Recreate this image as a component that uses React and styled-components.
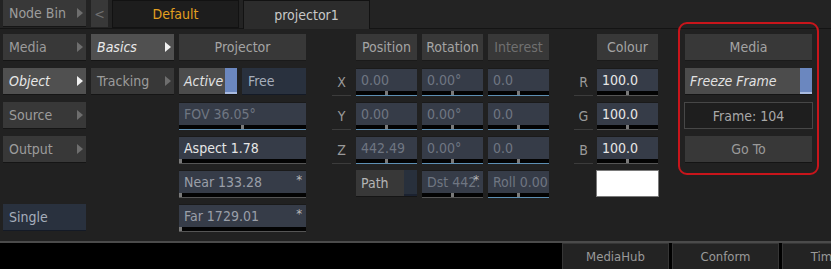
import React from "react";
import styled, { createGlobalStyle, css } from "styled-components";

const GlobalStyle = createGlobalStyle`
  html, body { margin: 0; padding: 0; background: #212121; }
  body {
    font-family: "Liberation Sans Narrow", "DejaVu Sans Condensed", Roboto, sans-serif;
    font-size: 14px;
  }
  * { box-sizing: border-box; }
`;

const Root = styled.div`
  width: 831px;
  height: 269px;
  display: flex;
  flex-direction: column;
  background: #212121;
  overflow: hidden;
`;

const TopBar = styled.div`
  height: 29px;
  display: flex;
  align-items: flex-start;
  padding-left: 3px;
  background: #232323;
  border-bottom: 1px solid #141414;
`;

const arrow = css`
  &::after {
    content: "";
    position: absolute;
    right: 3px;
    top: 50%;
    margin-top: -5px;
    border-style: solid;
    border-width: 5px 0 5px 6px;
    border-color: transparent transparent transparent ${(p) => (p.$selected ? "#f0f0f0" : "#6e6e6e")};
  }
`;

const NavButton = styled.div`
  position: relative;
  height: 27px;
  width: ${(p) => p.$w || 83}px;
  display: flex;
  align-items: center;
  padding-left: 6px;
  background: ${(p) => (p.$selected ? "#505050" : "#383838")};
  border-bottom: 1px solid #151515;
  color: ${(p) => (p.$selected ? "#e8e8e8" : "#9c9c9c")};
  font-style: ${(p) => (p.$selected ? "italic" : "normal")};
  ${(p) => p.$arrow && arrow}
`;

const BackButton = styled.div`
  height: 27px;
  width: 17px;
  margin-left: 5px;
  background: #383838;
  color: #707070;
  display: flex;
  align-items: center;
  justify-content: center;
`;

const Tab = styled.div`
  height: ${(p) => (p.$active ? 29 : 28)}px;
  width: 127px;
  margin-left: ${(p) => p.$ml || 0}px;
  display: flex;
  align-items: center;
  justify-content: center;
  background: ${(p) => (p.$active ? "#2c2c2c" : "#1d1d1d")};
  border: 1px solid #121212;
  border-bottom: ${(p) => (p.$active ? "none" : "1px solid #121212")};
  color: ${(p) => (p.$orange ? "#e3a020" : "#c8c8c8")};
`;

const Main = styled.div`
  flex: 1;
  display: flex;
  align-items: flex-start;
  padding: 5px 0 0 3px;
`;

const Column = styled.div`
  display: grid;
  grid-template-columns: ${(p) => p.$cols || "1fr"};
  grid-auto-rows: 27px;
  row-gap: 7px;
  column-gap: ${(p) => p.$cgap ?? 5}px;
  width: ${(p) => p.$w}px;
  margin-left: ${(p) => p.$ml || 0}px;
`;

const Header = styled.div`
  height: 27px;
  display: flex;
  align-items: center;
  justify-content: center;
  background: #383838;
  border-bottom: 1px solid #1a1a1a;
  color: ${(p) => (p.$dim ? "#707070" : "#a4a4a4")};
`;

const AxisLabel = styled.div`
  display: flex;
  align-items: center;
  justify-content: center;
  color: #9a9a9a;
  border-bottom: 1px solid #3c3c3c;
  height: 28px;
`;

const Spacer = styled.div``;

const ToggleWrap = styled.div`
  display: flex;
  gap: 5px;
`;

const ToggleButton = styled.div`
  flex: 1;
  display: flex;
  height: 27px;
  background: ${(p) => (p.$on ? "#4c4c4c" : "#383838")};
  border-bottom: 1px solid #151515;
`;

const ToggleLabel = styled.div`
  flex: 1;
  display: flex;
  align-items: center;
  padding-left: 5px;
  color: ${(p) => (p.$on ? "#e2e2e2" : "#b4b4b4")};
  font-style: ${(p) => (p.$on ? "italic" : "normal")};
`;

const ToggleIndicator = styled.div`
  width: ${(p) => p.$w || 12}px;
  background: ${(p) => (p.$on ? "#6b87bf" : "#28303c")};
  border-bottom: 2px solid ${(p) => (p.$on ? "#a9bbe0" : "#1b2230")};
`;

const BlueButton = styled.div`
  ${(p) => (p.$flex ? "flex: 1;" : "")}
  height: 27px;
  display: flex;
  align-items: center;
  padding-left: 6px;
  background: #29313e;
  border-bottom: 1px solid #141a26;
  color: #a6aebb;
`;

const Field = styled.div`
  position: relative;
  height: 28px;
  display: flex;
  flex-direction: column;
  border-top: 1px solid #1a1a1a;
`;

const FieldBody = styled.div`
  flex: 1;
  display: flex;
  align-items: center;
  padding-left: 5px;
  padding-bottom: 1px;
  background: #363c48;
  color: ${(p) => p.$color};
  white-space: nowrap;
  overflow: hidden;
`;

const Track = styled.div`
  position: relative;
  height: 4px;
  background: #030303;
`;

const Handle = styled.div`
  position: absolute;
  top: 0;
  width: 3px;
  height: 4px;
  background: #7a7a7a;
`;

const BaseLine = styled.div`
  height: 1px;
  background: ${(p) => (p.$blue ? "#5d8fb3" : "#555")};
`;

const Star = styled.span`
  position: absolute;
  right: 4px;
  top: 1px;
  color: #b8b8b8;
  font-size: 13px;
`;

const Swatch = styled.div`
  background: #ffffff;
  border: 1px solid #7a7a7a;
  margin: 0 -1px;
`;

const MediaGroup = styled.div`
  position: relative;
  margin-left: 27px;
  width: 127px;
  display: grid;
  grid-auto-rows: 27px;
  row-gap: 7px;
  &::before {
    content: "";
    position: absolute;
    top: -12px;
    bottom: -12px;
    left: -7px;
    right: -7px;
    border: 2px solid #c8151b;
    border-radius: 9px;
    pointer-events: none;
  }
`;

const FrameBox = styled.div`
  display: flex;
  align-items: center;
  justify-content: center;
  background: #1e1e1e;
  border: 1px solid #474747;
  margin: 0 -1px;
  color: #a8a8a8;
`;

const PlainButton = styled.div`
  display: flex;
  align-items: center;
  justify-content: center;
  background: #383838;
  border-bottom: 1px solid #141414;
  color: #9a9a9a;
`;

const Footer = styled.div`
  height: 28px;
  display: flex;
  background: #000;
  border-top: 2px solid #4b4b4b;
  padding-left: 562px;
  gap: 3px;
`;

const FooterTab = styled.div`
  width: 107px;
  flex-shrink: 0;
  display: flex;
  align-items: center;
  justify-content: center;
  background: #232323;
  border: 1px solid #363636;
  border-bottom: none;
  color: #9a9a9a;
  font-size: 13px;
  white-space: nowrap;
`;

function SliderField({ text, color = "#e6e6e6", pos = 0.5, blue, star }) {
  return (
    <Field>
      <FieldBody $color={color}>{text}</FieldBody>
      <Track>
        <Handle style={{ left: `calc(${pos * 100}% - ${pos * 3}px)` }} />
      </Track>
      <BaseLine $blue={blue} />
      {star && <Star>*</Star>}
    </Field>
  );
}

const DIM = "#6f7682";
const MID = "#9a9fa8";

export default function App() {
  return (
    <Root>
      <GlobalStyle />
      <TopBar>
        <NavButton $arrow>Node Bin</NavButton>
        <BackButton>&lt;</BackButton>
        <Tab $ml={4} $orange>Default</Tab>
        <Tab $ml={4} $active>projector1</Tab>
      </TopBar>
      <Main>
        <Column $w={83}>
          <NavButton $arrow>Media</NavButton>
          <NavButton $arrow $selected>Object</NavButton>
          <NavButton $arrow>Source</NavButton>
          <NavButton $arrow>Output</NavButton>
          <Spacer />
          <BlueButton>Single</BlueButton>
        </Column>
        <Column $w={83} $ml={5}>
          <NavButton $arrow $selected>Basics</NavButton>
          <NavButton $arrow>Tracking</NavButton>
        </Column>
        <Column $w={127} $ml={5}>
          <Header>Projector</Header>
          <ToggleWrap>
            <ToggleButton $on>
              <ToggleLabel $on>Active</ToggleLabel>
              <ToggleIndicator $on />
            </ToggleButton>
            <BlueButton $flex>Free</BlueButton>
          </ToggleWrap>
          <SliderField text="FOV 36.05°" color={DIM} pos={0.5} blue />
          <SliderField text="Aspect 1.78" pos={0} />
          <SliderField text="Near 133.28" color={MID} pos={0} star />
          <SliderField text="Far 1729.01" color={MID} pos={0} star />
        </Column>
        <Column $w={216} $ml={26} $cols="19px 61px 61px 61px" $cgap={5}>
          <Spacer />
          <Header>Position</Header>
          <Header>Rotation</Header>
          <Header $dim>Interest</Header>

          <AxisLabel>X</AxisLabel>
          <SliderField text="0.00" color={DIM} blue />
          <SliderField text="0.00°" color={DIM} blue />
          <SliderField text="0.0" color={DIM} blue />

          <AxisLabel>Y</AxisLabel>
          <SliderField text="0.00" color={DIM} blue />
          <SliderField text="0.00°" color={DIM} blue />
          <SliderField text="0.0" color={DIM} blue />

          <AxisLabel>Z</AxisLabel>
          <SliderField text="442.49" color={DIM} blue />
          <SliderField text="0.00°" color={DIM} blue />
          <SliderField text="0.0" color={DIM} blue />

          <Spacer />
          <ToggleButton>
            <ToggleLabel>Path</ToggleLabel>
            <ToggleIndicator $w={13} />
          </ToggleButton>
          <SliderField text="Dst 442." color={DIM} star />
          <SliderField text="Roll 0.00" color={DIM} blue />
        </Column>
        <Column $w={84} $ml={26} $cols="19px 61px" $cgap={4}>
          <Spacer />
          <Header>Colour</Header>
          <AxisLabel>R</AxisLabel>
          <SliderField text="100.0" />
          <AxisLabel>G</AxisLabel>
          <SliderField text="100.0" />
          <AxisLabel>B</AxisLabel>
          <SliderField text="100.0" />
          <Spacer />
          <Swatch />
        </Column>
        <MediaGroup>
          <Header>Media</Header>
          <ToggleButton $on>
            <ToggleLabel $on>Freeze Frame</ToggleLabel>
            <ToggleIndicator $on />
          </ToggleButton>
          <FrameBox>Frame: 104</FrameBox>
          <PlainButton>Go To</PlainButton>
        </MediaGroup>
      </Main>
      <Footer>
        <FooterTab>MediaHub</FooterTab>
        <FooterTab>Conform</FooterTab>
        <FooterTab>Timeline</FooterTab>
      </Footer>
    </Root>
  );
}
